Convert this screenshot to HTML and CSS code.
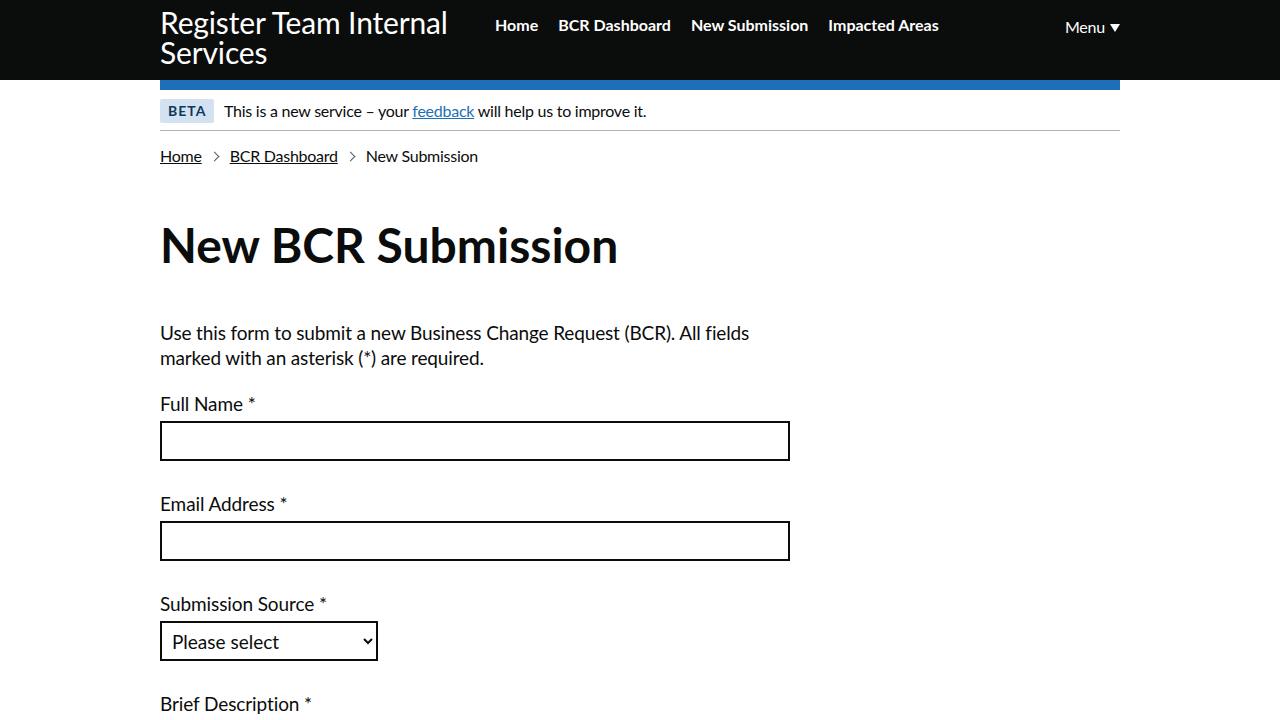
FILE: index.html
```html
<!DOCTYPE html>
<html lang="en">
<head>
<meta charset="utf-8">
<title>New BCR Submission</title>
<link rel="stylesheet" href="styles.css">
</head>
<body>
<header class="header">
  <div class="header-inner">
    <a class="service-name" href="#">Register Team Internal Services</a>
    <nav class="nav">
      <a href="#">Home</a>
      <a href="#">BCR Dashboard</a>
      <a href="#">New Submission</a>
      <a href="#">Impacted Areas</a>
    </nav>
    <button class="menu" type="button">Menu<span class="menu-arrow"></span></button>
  </div>
  <div class="header-bar"></div>
</header>
<div class="width-container">
  <div class="phase-banner">
    <strong class="tag">BETA</strong>
    <span class="phase-text">This is a new service – your <a href="#">feedback</a> will help us to improve it.</span>
  </div>
  <nav class="breadcrumbs">
    <a href="#">Home</a>
    <span class="chev"></span>
    <a href="#">BCR Dashboard</a>
    <span class="chev"></span>
    <span class="current">New Submission</span>
  </nav>
  <main class="main">
    <h1 class="heading">New BCR Submission</h1>
    <div class="two-thirds">
      <p class="intro">Use this form to submit a new Business Change Request (BCR). All fields marked with an asterisk (*) are required.</p>
      <form class="form">
        <div class="group">
          <label class="label" for="name">Full Name *</label>
          <input class="input" id="name" type="text">
        </div>
        <div class="group">
          <label class="label" for="email">Email Address *</label>
          <input class="input" id="email" type="email">
        </div>
        <div class="group">
          <label class="label" for="source">Submission Source *</label>
          <select class="select" id="source">
            <option>Please select</option>
          </select>
        </div>
        <div class="group">
          <label class="label" for="desc">Brief Description *</label>
          <input class="input" id="desc" type="text">
        </div>
      </form>
    </div>
  </main>
</div>
</body>
</html>
```
FILE: styles.css
```css
* { box-sizing: border-box; }
html, body { margin: 0; padding: 0; background: #fff; }
body {
  font-family: Lato, "Noto Sans", Arial, sans-serif;
  color: #0b0c0c;
  overflow: hidden;
}
.header { background: linear-gradient(#0b0c0c 0 80px, #fff 80px); }
.header-inner {
  width: 960px;
  margin: 0 auto;
  height: 80px;
  display: flex;
  align-items: flex-start;
}
.service-name {
  width: 335px;
  color: #fff;
  text-decoration: none;
  font-size: 30px;
  line-height: 30px;
  letter-spacing: -0.15px;
  padding-top: 7px;
}
.nav {
  display: flex;
  gap: 20px;
  padding-top: 15px;
  flex: 1;
}
.nav a {
  color: #fff;
  font-weight: 700;
  font-size: 16px;
  line-height: 20px;
  text-decoration: none;
}
.menu {
  display: flex;
  align-items: center;
  background: none;
  border: 0;
  color: #fff;
  font-family: inherit;
  font-size: 16px;
  line-height: 20px;
  padding: 17px 0 0;
  letter-spacing: -0.2px;
}
.menu-arrow {
  width: 0;
  height: 0;
  border-left: 5px solid transparent;
  border-right: 5px solid transparent;
  border-top: 8px solid #fff;
  margin-left: 5px;
  margin-top: 1px;
}
.header-bar {
  width: 960px;
  margin: 0 auto;
  height: 10px;
  background: #1d70b8;
}
.width-container { width: 960px; margin: 0 auto; }
.phase-banner {
  display: flex;
  align-items: center;
  gap: 10px;
  padding: 9px 0 7px;
  border-bottom: 1px solid #b1b4b6;
  font-size: 16px;
  line-height: 22px;
  letter-spacing: -0.25px;
}
.tag {
  background: #d2e2f1;
  color: #0f385c;
  font-size: 14px;
  font-weight: 700;
  letter-spacing: 1px;
  line-height: 16px;
  padding: 4px 8px 4px;
  border-radius: 2px;
  width: 54px;
  text-align: center;
}
.phase-text a { color: #1d70b8; }
.breadcrumbs {
  display: flex;
  align-items: center;
  padding-top: 14px;
  font-size: 16px;
  line-height: 22px;
  letter-spacing: -0.25px;
}
.breadcrumbs a { color: #0b0c0c; }
.chev {
  width: 7px;
  height: 7px;
  border-top: 1px solid #505a5f;
  border-right: 1px solid #505a5f;
  transform: rotate(45deg);
  margin: 0 12px 0 9px;
}
.main { padding-top: 53px; }
.heading {
  font-size: 48px;
  line-height: 50px;
  font-weight: 700;
  margin: 0 0 50px;
}
.two-thirds { width: 640px; }
.intro {
  font-size: 19px;
  line-height: 25px;
  letter-spacing: -0.14px;
  margin: 0 0 21px;
}
.group { margin-bottom: 30px; }
.label {
  display: block;
  font-size: 19px;
  line-height: 25px;
  letter-spacing: -0.1px;
  margin-bottom: 5px;
}
.input {
  display: block;
  width: 630px;
  height: 40px;
  border: 2px solid #0b0c0c;
  border-radius: 0;
  font-family: inherit;
  font-size: 19px;
  padding: 5px;
  margin: 0;
}
.select {
  display: block;
  width: 218px;
  height: 40px;
  border: 2px solid #0b0c0c;
  border-radius: 0;
  background: #fff;
  color: #0b0c0c;
  font-family: inherit;
  font-size: 19px;
  padding: 5px 6px;
  margin: 0;
}
```
